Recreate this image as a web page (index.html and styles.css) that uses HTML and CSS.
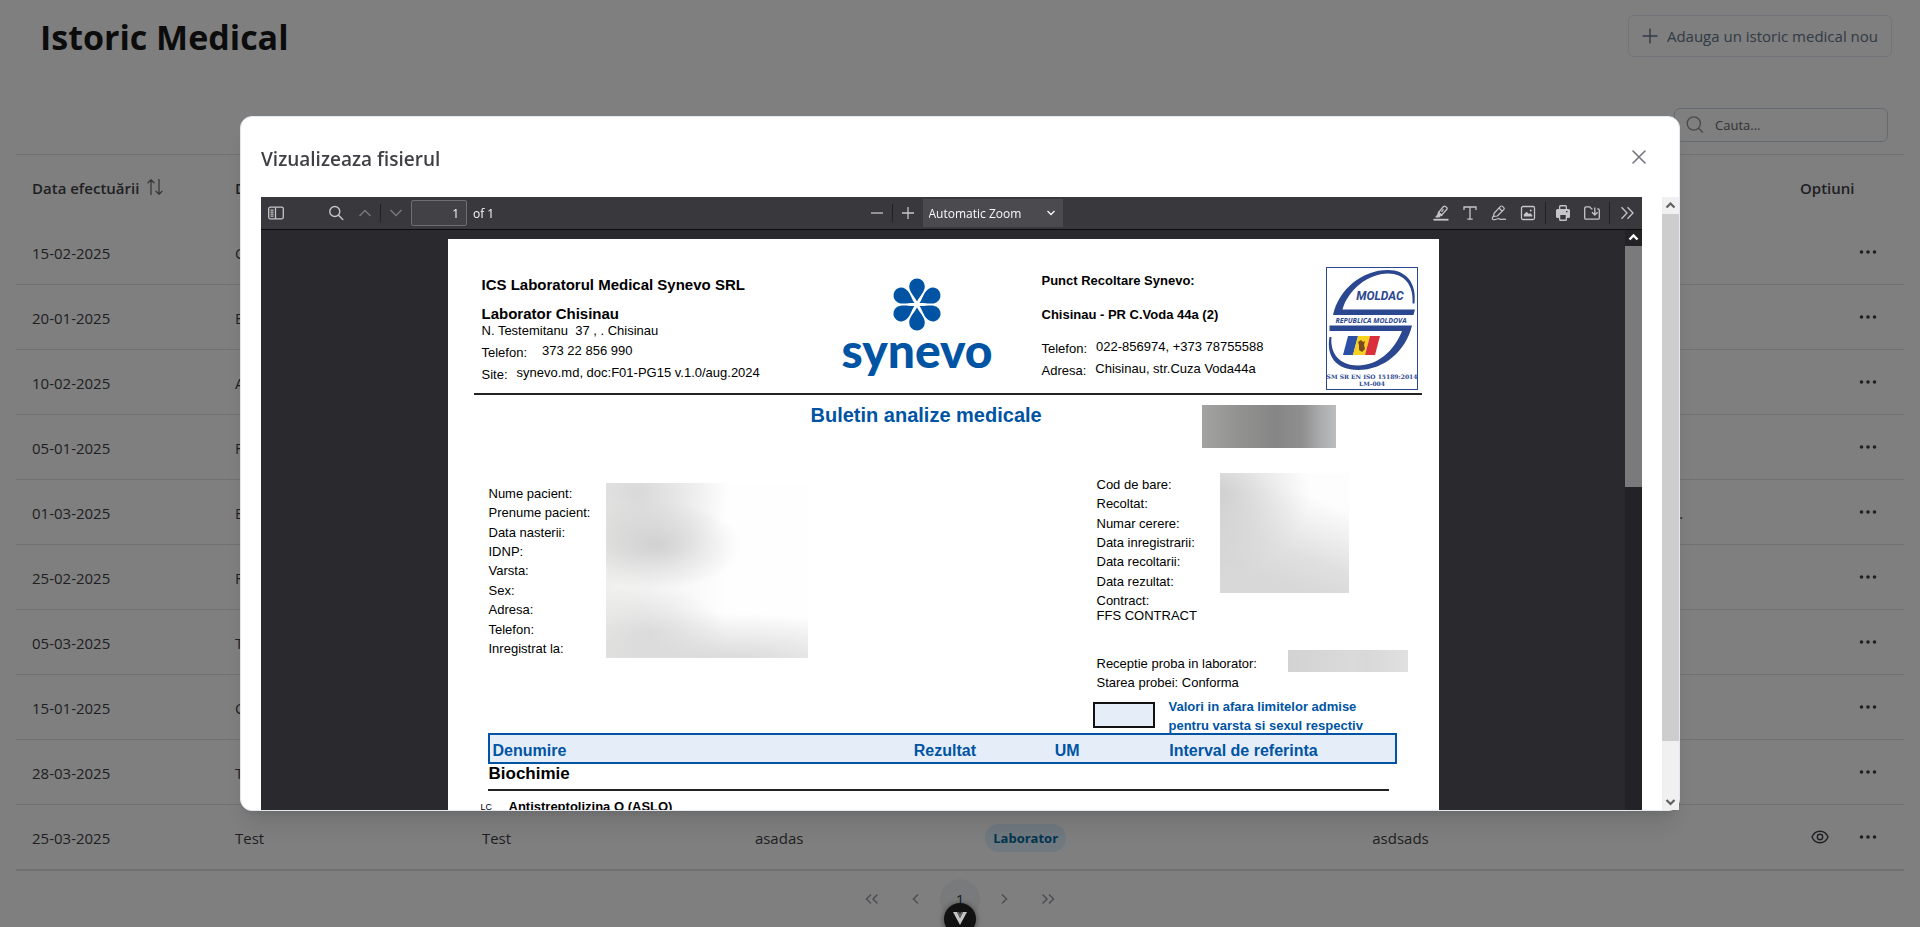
FILE: index.html
```html
<!DOCTYPE html>
<html lang="ro">
<head>
<meta charset="utf-8">
<title>Istoric Medical</title>
<link rel="stylesheet" href="styles.css">
</head>
<body>
<main class="history">
  <header class="history-head">
    <h1>Istoric Medical</h1>
    <button class="add-btn" type="button">
      <svg width="16" height="16" viewBox="0 0 16 16" fill="none" stroke="currentColor" stroke-width="1.4"><path d="M8 .5v15M.5 8h15"/></svg>
      Adauga un istoric medical nou
    </button>
  </header>
  <div class="search-row">
    <label class="search">
      <svg width="18" height="18" viewBox="0 0 18 18" fill="none" stroke="currentColor" stroke-width="1.4" stroke-linecap="round"><circle cx="7.8" cy="7.5" r="6.6"/><path d="M12.6 12.3l4 4"/></svg>
      <input type="text" placeholder="Cauta..." aria-label="Cauta">
    </label>
  </div>
  <table class="records">
    <colgroup><col class="c-date"><col class="c-name"><col class="c-desc"><col class="c-doctor"><col class="c-type"><col class="c-notes"><col class="c-options"></colgroup>
    <thead>
      <tr>
        <th><span class="sortable">Data efectuării
          <svg width="16" height="18" viewBox="0 0 16 18" fill="none" stroke="currentColor" stroke-width="1.3" stroke-linecap="round" stroke-linejoin="round"><path d="M4 15.5V.8M1 3.8l3-3 3 3M12 .5v14.7M9 12.2l3 3 3-3"/></svg></span></th>
        <th>Denumire</th><th></th><th></th><th></th><th></th><th>Optiuni</th>
      </tr>
    </thead>
    <tbody>
      <tr><td>15-02-2025</td><td>Consult</td><td></td><td></td><td></td><td></td><td><div class="actions"><button type="button" aria-label="Optiuni"><svg width="18" height="6" viewBox="0 0 18 6" fill="currentColor"><use href="#dots"/></svg></button></div></td></tr>
      <tr><td>20-01-2025</td><td>EKG</td><td></td><td></td><td></td><td></td><td><div class="actions"><button type="button" aria-label="Optiuni"><svg width="18" height="6" viewBox="0 0 18 6" fill="currentColor"><use href="#dots"/></svg></button></div></td></tr>
      <tr><td>10-02-2025</td><td>Analize</td><td></td><td></td><td></td><td></td><td><div class="actions"><button type="button" aria-label="Optiuni"><svg width="18" height="6" viewBox="0 0 18 6" fill="currentColor"><use href="#dots"/></svg></button></div></td></tr>
      <tr><td>05-01-2025</td><td>Fizioterapie</td><td></td><td></td><td></td><td></td><td><div class="actions"><button type="button" aria-label="Optiuni"><svg width="18" height="6" viewBox="0 0 18 6" fill="currentColor"><use href="#dots"/></svg></button></div></td></tr>
      <tr><td>01-03-2025</td><td>Ecografie</td><td></td><td></td><td></td><td><span class="note">Se recomanda repetarea analizelor.</span></td><td><div class="actions"><button type="button" aria-label="Optiuni"><svg width="18" height="6" viewBox="0 0 18 6" fill="currentColor"><use href="#dots"/></svg></button></div></td></tr>
      <tr><td>25-02-2025</td><td>Fizioterapie</td><td></td><td></td><td></td><td></td><td><div class="actions"><button type="button" aria-label="Optiuni"><svg width="18" height="6" viewBox="0 0 18 6" fill="currentColor"><use href="#dots"/></svg></button></div></td></tr>
      <tr><td>05-03-2025</td><td>Test</td><td></td><td></td><td></td><td></td><td><div class="actions"><button type="button" aria-label="Optiuni"><svg width="18" height="6" viewBox="0 0 18 6" fill="currentColor"><use href="#dots"/></svg></button></div></td></tr>
      <tr><td>15-01-2025</td><td>Consult</td><td></td><td></td><td></td><td></td><td><div class="actions"><button type="button" aria-label="Optiuni"><svg width="18" height="6" viewBox="0 0 18 6" fill="currentColor"><use href="#dots"/></svg></button></div></td></tr>
      <tr><td>28-03-2025</td><td>Test</td><td></td><td></td><td></td><td></td><td><div class="actions"><button type="button" aria-label="Optiuni"><svg width="18" height="6" viewBox="0 0 18 6" fill="currentColor"><use href="#dots"/></svg></button></div></td></tr>
      <tr><td>25-03-2025</td><td>Test</td><td>Test</td><td>asadas</td><td><span class="tag">Laborator</span></td><td>asdsads</td><td><div class="actions"><button type="button" aria-label="Vizualizeaza"><svg width="18" height="14" viewBox="0 0 18 14" fill="none" stroke="currentColor" stroke-width="1.4"><path d="M1 7C2.6 3.2 5.5 1.2 9 1.2S15.4 3.2 17 7c-1.6 3.8-4.500 5.800-8 5.800S2.600 10.800 1 7z"/><circle cx="9" cy="7" r="2.700"/></svg></button><button type="button" aria-label="Optiuni"><svg width="18" height="6" viewBox="0 0 18 6" fill="currentColor"><g id="dots"><circle cx="2.500" cy="3" r="1.800"/><circle cx="9" cy="3" r="1.800"/><circle cx="15.500" cy="3" r="1.800"/></g></svg></button></div></td></tr>
    </tbody>
  </table>
  <nav class="pager" aria-label="Pagini">
    <button type="button" aria-label="Prima pagina"><svg width="14" height="12" viewBox="0 0 14 12"><path d="M6 1.500L1.500 6 6 10.500M12.500 1.500L8 6l4.500 4.500"/></svg></button>
    <button type="button" aria-label="Pagina anterioara"><svg width="14" height="12" viewBox="0 0 14 12"><path d="M9 1.500L4.500 6 9 10.500"/></svg></button>
    <button type="button" class="current">1</button>
    <button type="button" aria-label="Pagina urmatoare"><svg width="14" height="12" viewBox="0 0 14 12"><path d="M5 1.500L9.500 6 5 10.500"/></svg></button>
    <button type="button" aria-label="Ultima pagina"><svg width="14" height="12" viewBox="0 0 14 12"><path d="M1.500 1.500L6 6l-4.500 4.500M8 1.500L12.500 6 8 10.500"/></svg></button>
  </nav>
</main>

<div class="overlay">
  <section class="modal" role="dialog" aria-labelledby="modal-title">
    <header class="modal-head">
      <h2 id="modal-title">Vizualizeaza fisierul</h2>
      <button type="button" class="close" aria-label="Inchide"><svg width="14" height="14" viewBox="0 0 14 14" fill="none" stroke="currentColor" stroke-width="1.5" stroke-linecap="round"><path d="M1 1l12 12M13 1L1 13"/></svg></button>
    </header>
    <div class="modal-body">
      <div class="viewer">
        <div class="toolbar">
          <div class="tools">
            <button type="button" class="toggle" aria-label="Sidebar"><svg width="16" height="16" viewBox="0 0 16 16" fill="none" stroke="currentColor" stroke-width="1.3"><rect x=".7" y="2.200" width="14.600" height="11.600" rx="1.500"/><path d="M7.500 2.200v11.600M2.500 5.200h3M2.500 7.200h3M2.500 9.200h3M2.500 11.200h3"/></svg></button>
            <button type="button" aria-label="Find"><svg width="16" height="16" viewBox="0 0 16 16" fill="none" stroke="currentColor" stroke-width="1.400" stroke-linecap="round"><circle cx="6.800" cy="6.500" r="5"/><path d="M10.500 10.200l4.300 4.300"/></svg></button>
            <button type="button" disabled aria-label="Previous"><svg width="16" height="16" viewBox="0 0 16 16" fill="none" stroke="currentColor" stroke-width="1.300"><path d="M2.500 11L8 5.500l5.500 5.500"/></svg></button>
            <i class="sep"></i>
            <button type="button" disabled aria-label="Next"><svg width="16" height="16" viewBox="0 0 16 16" fill="none" stroke="currentColor" stroke-width="1.300"><path d="M2.500 5L8 10.500 13.500 5"/></svg></button>
            <input class="page-no" type="text" value="1" aria-label="Page">
            <span class="page-count">of 1</span>
          </div>
          <div class="tools zoom">
            <button type="button" aria-label="Zoom out"><svg width="16" height="16" viewBox="0 0 16 16" stroke="currentColor" stroke-width="1.300"><path d="M2 8h12"/></svg></button>
            <i class="sep"></i>
            <button type="button" aria-label="Zoom in"><svg width="16" height="16" viewBox="0 0 16 16" stroke="currentColor" stroke-width="1.300"><path d="M2 8h12M8 2v12"/></svg></button>
            <span class="select-wrap">
              <select aria-label="Zoom"><option>Automatic Zoom</option></select>
              <svg width="10" height="8" viewBox="0 0 10 8" fill="none" stroke="currentColor" stroke-width="1.300"><path d="M1.500 2L5 5.500 8.500 2"/></svg>
            </span>
          </div>
          <div class="tools end">
            <button type="button" aria-label="Highlight"><svg width="16" height="16" viewBox="0 0 16 16" fill="none" stroke="currentColor" stroke-width="1.200" stroke-linejoin="round"><path d="M.5 14.700h15" stroke-width="1.800"/><path d="M5.500 7.500l5-6a1.500 1.500 0 0 1 2 0l1.200 1a1.500 1.500 0 0 1 0 2l-5 5.500z"/><path d="M5.500 7.500L4.800 10 3 11.800h3.200l.6-.8 2-.500z" fill="currentColor"/><path d="M8.500 6.800l2-2.400"/></svg></button>
            <button type="button" aria-label="Text"><svg width="16" height="16" viewBox="0 0 16 16" fill="none" stroke="currentColor" stroke-width="1.300"><path d="M2 5V2h12v3M8 2v12M5.300 14.200h5.400"/></svg></button>
            <button type="button" aria-label="Draw"><svg width="16" height="16" viewBox="0 0 16 16" fill="none" stroke="currentColor" stroke-width="1.200" stroke-linejoin="round" stroke-linecap="round"><path d="M2.300 11.500l1-3.500 6.200-6.600a1.400 1.400 0 0 1 2 0l1.300 1.200a1.400 1.400 0 0 1 0 2L6.300 11zM8.500 3.500L11 6"/><path d="M2.300 11.500C.5 13.500 1.300 15 3.500 14.700c2-.3 3-1.200 4.500-1.200.8.100.8 1.100 2 1 1.500-.2 2.500-.7 4.500-.2"/></svg></button>
            <button type="button" aria-label="Image"><svg width="16" height="16" viewBox="0 0 16 16" fill="none" stroke="currentColor" stroke-width="1.300"><rect x="1.500" y="1.500" width="13" height="13" rx="1.500"/><path d="M3.800 11.500V9.500L6.500 6.800 9 9l1-1 2.200 2v1.500z" fill="currentColor" stroke="none"/><circle cx="10.800" cy="5.500" r="1" fill="currentColor" stroke="none"/></svg></button>
            <i class="sep tall"></i>
            <button type="button" aria-label="Print"><svg width="16" height="16" viewBox="0 0 16 16" fill="currentColor"><path d="M4 4V1.500A1.500 1.500 0 0 1 5.500 0h5A1.500 1.500 0 0 1 12 1.500V4h1.500A1.500 1.500 0 0 1 15 5.500v6a1.500 1.500 0 0 1-1.500 1.500H12v1.500a1.500 1.500 0 0 1-1.500 1.500h-5A1.500 1.500 0 0 1 4 14.500V13H2.500A1.500 1.500 0 0 1 1 11.500v-6A1.500 1.500 0 0 1 2.500 4zm1.300 0h5.400V1.400H5.300zm0 6v4.600h5.400V10zM11 6v1.300h1.500V6z" fill-rule="evenodd"/></svg></button>
            <button type="button" aria-label="Save"><svg width="16" height="16" viewBox="0 0 16 16" fill="none" stroke="currentColor" stroke-width="1.300" stroke-linejoin="round"><path d="M8.500 3.800H7.500L5.800 1.800H2A1.300 1.300 0 0 0 .7 3.100v9.800A1.300 1.300 0 0 0 2 14.200h12a1.300 1.300 0 0 0 1.300-1.300V5.100A1.300 1.300 0 0 0 14 3.800h-.8"/><path d="M10.800 2.500v7M8 7.200l2.800 2.800 2.800-2.800"/></svg></button>
            <i class="sep tall"></i>
            <button type="button" aria-label="Tools"><svg width="16" height="16" viewBox="0 0 16 16" fill="none" stroke="currentColor" stroke-width="1.300"><path d="M2.500 2.200L8 8l-5.500 5.800M8.500 2.200L14 8l-5.500 5.800"/></svg></button>
          </div>
        </div>
        <div class="canvas">
          <div class="pages">
            <article class="sheet">
              <header class="lab-head">
                <div class="lab">
                  <strong class="lab-name">ICS Laboratorul Medical Synevo SRL</strong>
                  <strong class="lab-city">Laborator Chisinau</strong>
                  <span class="lab-street">N. Testemitanu&nbsp; 37 , . Chisinau</span>
                  <dl class="contact">
                    <div class="wide"><dt>Telefon:</dt><dd>373 22 856 990</dd></div>
                    <div><dt>Site:</dt><dd>synevo.md, doc:F01-PG15 v.1.0/aug.2024</dd></div>
                  </dl>
                </div>
                <svg class="logo" width="150" height="123" viewBox="0 0 150 123" fill="#0054a3">
                  <g transform="translate(75 37.500)">
                    <g id="pair"><path id="petal" d="M0-3C-2.500-8-7.800-12.500-7.800-18.200a7.800 7.800 0 0 1 15.600 0C7.800-12.500 2.500-8 0-3z"/><use href="#petal" transform="rotate(180)"/></g>
                    <use href="#pair" transform="rotate(60)"/><use href="#pair" transform="rotate(120)"/>
                  </g>
                  <text x="75" y="101" text-anchor="middle" class="logo-text">synevo</text>
                </svg>
                <div class="point">
                  <strong>Punct Recoltare Synevo:</strong>
                  <strong>Chisinau - PR C.Voda 44a (2)</strong>
                  <dl class="contact">
                    <div><dt>Telefon:</dt><dd>022-856974, +373 78755588</dd></div>
                    <div><dt>Adresa:</dt><dd>Chisinau, str.Cuza Voda44a</dd></div>
                  </dl>
                </div>
                <svg class="moldac" width="92" height="123" viewBox="0 0 92 123">
                  <rect x=".5" y=".5" width="91" height="122" fill="#fff" stroke="#2b478f"/>
                  <g fill="#2b478f">
                    <path d="M7 48C13 22 36 3 62 3c18 0 29 13 26.500 33.500h-2C88 18 78 6.500 62 6.500 42 6.500 22 23 16.500 42.500H89L87.500 48z"/>
                    <path d="M3.500 58.500H86C80 84 58 103 32 103 10 103 0 89 3.500 70h2C4 86 13 98.500 32 98.500c19 0 36-14 44-34.500H3.500z"/>
                  </g>
                  <path d="M22 69h10l-5 19H17z" fill="#2d50a5"/><path d="M32 69h12l-5 19H27z" fill="#f6d21f"/><path d="M44 69h10l-5 19H39z" fill="#d9303c"/>
                  <path d="M35 73l2 2 2-1-1 4 1 4-3 3-3-2v-5l-1-3z" fill="#7c4a20"/>
                  <text x="54" y="33" text-anchor="middle" class="m-name">MOLDAC</text>
                  <text x="45" y="56" text-anchor="middle" class="m-land">REPUBLICA MOLDOVA</text>
                  <text x="46" y="112" text-anchor="middle" class="m-iso">SM SR EN ISO 15189:2014</text>
                  <text x="46" y="119" text-anchor="middle" class="m-iso">LM-004</text>
                </svg>
              </header>
              <div class="doc-title">
                <h3>Buletin analize medicale</h3>
                <span class="mask mask-code"></span>
              </div>
              <div class="details">
                <div class="patient">
                  <ul class="labels">
                    <li>Nume pacient:</li><li>Prenume pacient:</li><li>Data nasterii:</li><li>IDNP:</li><li>Varsta:</li><li>Sex:</li><li>Adresa:</li><li>Telefon:</li><li>Inregistrat la:</li>
                  </ul>
                  <span class="mask mask-patient"></span>
                </div>
                <div class="request">
                  <div class="request-main">
                    <div>
                      <ul class="labels">
                        <li>Cod de bare:</li><li>Recoltat:</li><li>Numar cerere:</li><li>Data inregistrarii:</li><li>Data recoltarii:</li><li>Data rezultat:</li><li>Contract:</li>
                      </ul>
                      <p class="contract">FFS CONTRACT</p>
                    </div>
                    <span class="mask mask-request"></span>
                  </div>
                  <div class="reception"><span>Receptie proba in laborator:</span><span class="mask mask-reception"></span></div>
                  <p class="state">Starea probei: Conforma</p>
                  <div class="legend"><span class="swatch"></span><p>Valori in afara limitelor admise<br>pentru varsta si sexul respectiv</p></div>
                </div>
              </div>
              <table class="results">
                <colgroup><col class="r-name"><col class="r-value"><col class="r-unit"><col></colgroup>
                <thead><tr><th>Denumire</th><th>Rezultat</th><th>UM</th><th>Interval de referinta</th></tr></thead>
                <tbody>
                  <tr><td colspan="4"><div class="group">Biochimie</div></td></tr>
                  <tr><td colspan="4"><div class="test"><small>LC</small><strong>Antistreptolizina O (ASLO)</strong></div></td></tr>
                </tbody>
              </table>
            </article>
          </div>
          <div class="scroll dark">
            <svg width="17" height="16" viewBox="0 0 17 16" fill="none" stroke="currentColor" stroke-width="2.400"><path d="M4.500 9.500l4-4 4 4"/></svg>
            <span class="thumb"></span>
          </div>
        </div>
      </div>
      <div class="scroll light">
        <svg width="17" height="17" viewBox="0 0 17 17" fill="none" stroke="currentColor" stroke-width="2.200"><path d="M4.500 10.500l4-4 4 4"/></svg>
        <div class="track"><span class="thumb"></span></div>
        <svg width="17" height="17" viewBox="0 0 17 17" fill="none" stroke="currentColor" stroke-width="2.200"><path d="M4.500 7l4 4 4-4"/></svg>
      </div>
    </div>
  </section>
</div>
<button type="button" class="devtools" aria-label="Devtools"><svg width="14" height="13" viewBox="0 0 14 13"><path d="M0 0h4l3 6 3-6h4L7 13z" fill="#c4c4c4"/><path d="M4 0h2l1 2 1-2h2L7 6z" fill="#666"/></svg></button>
</body>
</html>
```

FILE: styles.css
```css
* { box-sizing: border-box; }
body {
  margin: 0;
  min-height: 100vh;
  overflow: hidden;
  background: #fff;
  color: #3f3f46;
  font: 16px/24px "Segoe UI", "Open Sans", "Noto Sans", sans-serif;
}
button, input, select { font: inherit; color: inherit; }
button { border: 0; background: none; padding: 0; }
h1, h2, h3, p, dl, dd, ul { margin: 0; padding: 0; }
ul { list-style: none; }

/* Records page */
.history-head {
  display: flex;
  justify-content: space-between;
  align-items: flex-start;
  padding: 15px 28px 0 40px;
}
h1 { font-size: 34px; line-height: 44px; color: #18181b; }
.add-btn {
  display: flex;
  align-items: center;
  gap: 9px;
  height: 42px;
  padding: 0 13px;
  border: 1px solid #e2e8f0;
  border-radius: 6px;
  color: #64748b;
  font-size: 15px;
}
.search-row { display: flex; justify-content: flex-end; padding: 49px 32px 12px 0; }
.search {
  display: flex;
  align-items: center;
  gap: 9px;
  width: 214px;
  height: 34px;
  padding: 0 11px;
  border: 1px solid #cbd5e1;
  border-radius: 6px;
  color: #94949e;
}
.search svg { flex: none; }
.search input { width: 100%; min-width: 0; border: 0; outline: 0; background: none; font-size: 13px; }
.search input::placeholder { color: #64646c; opacity: 1; }

.records {
  width: calc(100% - 32px);
  margin: 0 16px;
  table-layout: fixed;
  border-spacing: 0;
  border-top: 1px solid #e2e2e8;
  border-bottom: 1px solid #e2e2e8;
}
.c-date { width: 10.75%; }
.c-name { width: 13.08%; }
.c-desc { width: 14.46%; }
.c-doctor { width: 12.2%; }
.c-type { width: 20.5%; }
.c-options { width: 120px; }
.records th, .records td { height: 65px; padding: 0 16px; text-align: left; white-space: nowrap; font-size: 15px; }
.records th { font-weight: 600; }
.records td { padding-top: 2px; border-bottom: 1px solid #e2e2e8; }
.sortable { display: flex; align-items: center; gap: 8px; }
.sortable svg { color: #71717a; }
.note { display: block; max-width: 311px; text-align: right; }
.tag {
  display: inline-block;
  padding: 0 8px;
  border-radius: 14px;
  background: #e0f2fe;
  color: #0369a1;
  font-weight: 700;
  font-size: 13px;
  line-height: 28px;
}
.actions { display: flex; justify-content: flex-end; gap: 30px; padding: 0 11px 2px 0; }
.actions button { display: grid; place-items: center; height: 24px; color: #3f3f46; }
.pager { display: flex; justify-content: center; gap: 4px; padding-top: 8px; }
.pager button { display: grid; place-items: center; width: 40px; height: 40px; border-radius: 50%; color: #a0a0a8; }
.pager svg { fill: none; stroke: currentColor; stroke-width: 1.6; }
.pager .current { background: #f1f5f9; color: #334155; font-size: 15px; }

/* Dialog */
.overlay {
  position: fixed;
  inset: 0;
  display: grid;
  place-items: center;
  background: rgba(0, 0, 0, .5);
}
.modal {
  display: flex;
  flex-direction: column;
  width: 75vw;
  height: 75vh;
  border: 1px solid #e2e8f0;
  border-radius: 12px;
  background: #fff;
  box-shadow: 0 20px 25px -5px rgba(0, 0, 0, .1), 0 8px 10px -6px rgba(0, 0, 0, .1);
}
.modal-head {
  display: flex;
  justify-content: space-between;
  align-items: center;
  height: 80px;
  padding: 0 33px 0 20px;
}
h2 { padding-top: 4px; font-size: 19px; line-height: 40px; font-weight: 600; }
.close { display: grid; color: #71717a; }
.modal-body { display: flex; flex: 1; gap: 20px; min-height: 0; padding-left: 20px; }
.viewer { display: flex; flex-direction: column; flex: 1; min-width: 0; background: #2a2a2e; }
.scroll { display: flex; flex-direction: column; flex: none; width: 17px; }
.scroll svg { flex: none; }
.track { display: flex; flex: 1; }
.scroll.light { background: #f0f0f0; color: #606060; }
.scroll.light .thumb { width: 100%; height: 91%; background: #cdcdcd; }
.scroll.dark { background: #232327; color: #fff; }
.scroll.dark .thumb { height: 41.5%; background: #7a7a7c; }

/* Viewer toolbar */
.toolbar {
  display: grid;
  grid-template-columns: 1fr auto 1fr;
  height: 33px;
  flex: none;
  border-bottom: 1px solid #0c0c0d;
  background: #38383d;
  color: #f9f9fa;
  font-size: 12px;
}
.tools { display: flex; align-items: center; gap: 1px; padding-left: 1px; }
.tools button { display: grid; place-items: center; width: 28px; height: 28px; color: #c6c6c8; }
.tools button:disabled { color: #7b7b7f; }
.tools .toggle { margin-right: 31px; }
.sep { width: 1px; height: 18px; background: #222226; }
.sep.tall { height: 22px; margin: 0 2px; }
.page-no {
  width: 56px;
  height: 26px;
  padding: 2px 7px 0;
  border: 1px solid #6f6f73;
  border-radius: 2px;
  background: #414146;
  text-align: right;
}
.page-count { padding: 2px 0 0 5px; }
.zoom { padding-left: 22px; }
.select-wrap { display: grid; align-items: center; height: 28px; width: 140px; background: #4a4a4f; }
.select-wrap > * { grid-area: 1 / 1; }
.select-wrap select {
  appearance: none;
  width: 100%;
  height: 28px;
  padding: 2px 6px 0;
  border: 0;
  background: none;
}
.select-wrap svg { justify-self: end; margin-right: 7px; pointer-events: none; }
.tools.end { justify-content: flex-end; padding-right: 1px; }

.canvas { display: flex; flex: 1; min-height: 0; }
.pages { flex: 1; min-width: 0; overflow: hidden; padding-top: 9px; }

/* Lab report */
.sheet {
  width: 100%;
  max-width: 991px;
  margin: 0 auto;
  padding: 28px 17px 40px 26px;
  background: #fff;
  color: #000;
  font: 13px/19px "Liberation Sans", Arial, sans-serif;
}
.lab-head {
  display: grid;
  grid-template-columns: 360px 200px 1fr auto;
  padding: 0 4px 3px 8px;
  border-bottom: 2px solid #222;
}
.lab, .point { display: flex; flex-direction: column; white-space: nowrap; }
.lab strong { font-size: 15px; }
.lab .lab-name { line-height: 36px; }
.lab .lab-city { line-height: 22px; }
.lab-street { line-height: 12px; margin-bottom: 5px; }
.contact > div { display: flex; gap: 9px; height: 22px; }
.contact .wide { gap: 15px; }
.contact dt { line-height: 22px; }
.contact dd { line-height: 17px; }
.point strong { font-size: 13px; line-height: 27px; }
.point strong + strong { margin: 7px 0 10px; }
.logo-text { font: 900 48px Lato, sans-serif; }
.m-name { font: italic 700 12px Roboto, sans-serif; fill: #2b478f; }
.m-land { font: italic 700 7px "Open Sans", sans-serif; fill: #2b478f; }
.m-iso { font: 700 6px "DejaVu Serif", serif; fill: #2b478f; }

.doc-title { display: flex; justify-content: space-between; padding: 10px 86px 25px 337px; }
.doc-title h3 { font-size: 20px; line-height: 20px; color: #0054a3; }
.mask { display: block; }
.mask-code { width: 134px; height: 43px; background: linear-gradient(90deg, #a3a3a1, #939392 25%, #868686 55%, #8f8f90 75%, #aaabac 88%, #bcbdbf); }

.details { display: flex; justify-content: space-between; }
.labels { display: flex; flex-direction: column; justify-content: space-between; line-height: 19px; }
.patient { display: flex; align-items: stretch; height: 185px; padding: 10px 0 0 15px; }
.patient .labels { width: 117px; padding-top: 1px; }
.mask-patient {
  width: 202px;
  background:
    radial-gradient(ellipse 85px 45px at 50px 62px, rgba(200, 200, 200, .75), transparent),
    radial-gradient(ellipse 90px 80px at 32px 10px, rgba(208, 208, 208, .75), transparent),
    radial-gradient(ellipse 80px 48px at 40px 150px, rgba(212, 212, 212, .7), transparent),
    radial-gradient(ellipse 230px 50px at 120px 180px, rgba(208, 208, 208, .85), transparent),
    linear-gradient(90deg, #efefee, #f6f6f6 30%, #fefefe 60%);
}
.request { width: 329px; }
.request-main { display: flex; justify-content: space-between; padding: 0 73px 0 4px; }
.request .labels { height: 137px; padding-top: 3px; line-height: 18px; }
.contract { line-height: 12px; }
.mask-request {
  width: 129px;
  height: 120px;
  background:
    radial-gradient(ellipse 90px 80px at 0 20px, rgba(200, 200, 200, .8), transparent),
    linear-gradient(20deg, #d8d8d8 20%, #e0e0e0 40%, #fdfdfd 78%);
}
.reception { display: flex; justify-content: space-between; align-items: flex-end; margin-top: 28px; padding: 0 14px 0 4px; line-height: 16px; }
.mask-reception { width: 120px; height: 22px; background: linear-gradient(90deg, #d3d3d3, #dadada 55%, #d8d8d8 65%, #e0e0e0); }
.state { padding-left: 4px; line-height: 22px; }
.legend { display: flex; gap: 14px; margin: 3px 0 -2px; color: #0054a3; font-weight: 700; }
.swatch { width: 62px; height: 26px; margin-top: 5px; border: 2px solid #111; background: #e5edf8; }

.results { width: calc(100% - 39px); margin: 0 25px 0 14px; table-layout: fixed; border-spacing: 0; }
.r-name { width: 46.9%; }
.r-value { width: 15.5%; }
.r-unit { width: 12.6%; }
.results th {
  height: 31px;
  padding: 4px 0 0;
  border: solid #0054a3;
  border-width: 2px 0;
  background: #e5edf8;
  color: #0054a3;
  text-align: left;
  font-size: 16px;
}
.results th:first-child { border-left-width: 2px; padding-left: 3px; }
.results th:last-child { border-right-width: 2px; }
.results td { padding: 0; }
.group { margin-right: 8px; padding: 0 0 5px 1px; border-bottom: 2px solid #222; font-weight: 700; font-size: 17px; line-height: 20px; }
.test { display: flex; align-items: center; gap: 14px; margin-left: -7px; padding-top: 1px; }
.test small { width: 14px; font-size: 9px; line-height: 30px; }

.devtools {
  position: fixed;
  left: 50%;
  bottom: -8px;
  display: grid;
  justify-items: center;
  width: 32px;
  height: 32px;
  margin-left: -16px;
  padding-top: 9px;
  border-radius: 50%;
  background: #111;
  box-shadow: 0 1px 6px rgba(0, 0, 0, .5);
}
```
